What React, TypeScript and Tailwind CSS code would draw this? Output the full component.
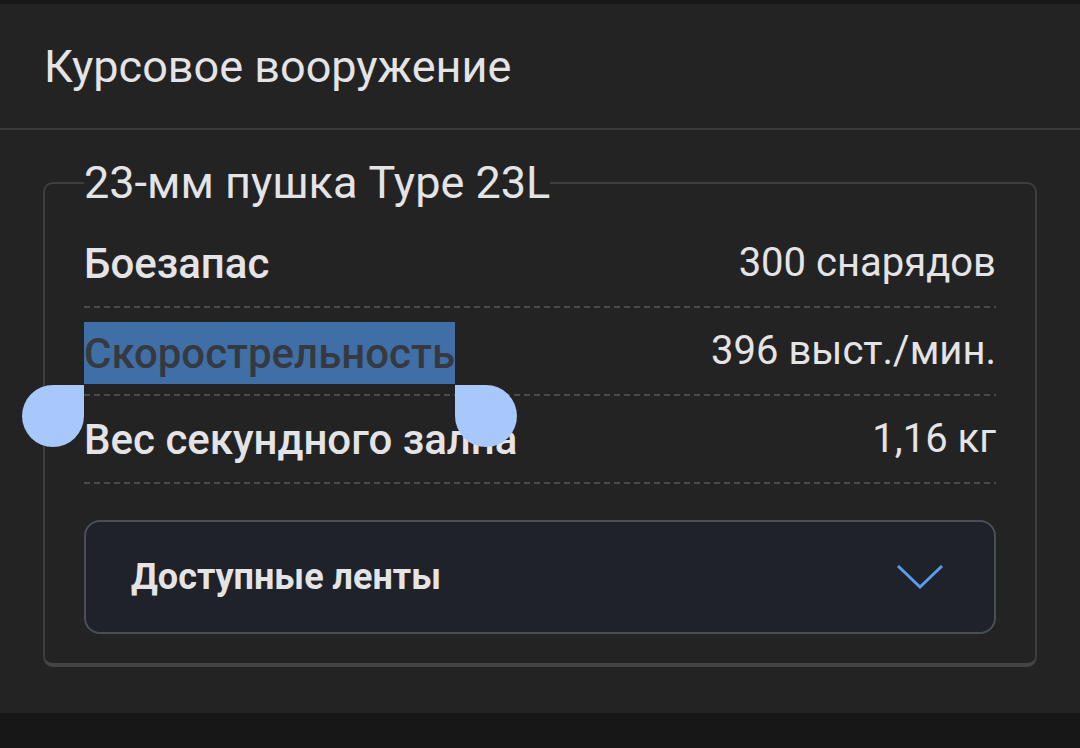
import React from "react";

const rows = [
  { label: "Боезапас", value: "300 снарядов" },
  { label: "Скорострельность", value: "396 выст./мин.", selected: true },
  { label: "Вес секундного залпа", value: "1,16 кг" },
];

export default function App() {
  return (
    <div
      className="w-[1080px] h-[748px] bg-[#232323] flex flex-col overflow-hidden text-[#e4e4e7]"
      style={{ fontFamily: "Roboto, 'Noto Sans', sans-serif" }}
    >
      <div className="h-[4px] bg-[#171717]" />
      <div className="h-[126px] flex items-center pl-[44px] border-b-2 border-[#3a3a3a]">
        <span className="text-[45px] leading-none">Курсовое вооружение</span>
      </div>
      <div className="flex-1 px-[43px] pt-[26px]">
        <fieldset className="relative border-2 border-b-[4px] border-[#3e3e3e] border-b-[#444444] rounded-[10px] px-[39px] pb-[29px]">
          <legend className="text-[45px] leading-[54px] p-0">23-мм пушка Type 23L</legend>
          <div className="flex flex-col mt-[10px]">
            {rows.map((r) => (
              <div key={r.label} className="relative flex flex-col">
                <div className="h-[86px] flex items-center justify-between">
                  {r.selected ? (
                    <span className="relative mt-[4px] font-medium text-[42px] text-[#363a40] bg-[#3f6fa6] h-[62px] flex items-center">
                      {r.label}
                      <span className="absolute left-[-62px] top-[63px] w-[62px] h-[62px] bg-[#a8c7fa] rounded-full rounded-tr-none z-10" />
                      <span className="absolute right-[-62px] top-[63px] w-[62px] h-[62px] bg-[#a8c7fa] rounded-full rounded-tl-none z-10" />
                    </span>
                  ) : (
                    <span className="font-medium text-[42px]">{r.label}</span>
                  )}
                  <span className="text-[40px]">{r.value}</span>
                </div>
                <div className="h-[2px] bg-[repeating-linear-gradient(to_right,#4a4a4a_0px,#4a4a4a_6px,transparent_6px,transparent_10px)]" />
              </div>
            ))}
          </div>
          <div className="mt-[36px] h-[114px] rounded-[16px] border-2 border-[#4a4f57] bg-[#1f2228] flex items-center justify-between pl-[45px] pr-[50px]">
            <span className="text-[36px] font-bold">Доступные ленты</span>
            <svg width="48" height="28" viewBox="0 0 48 28" fill="none">
              <path d="M2 3 L24 24 L46 3" stroke="#5a9cf0" strokeWidth="3" />
            </svg>
          </div>
        </fieldset>
      </div>
      <div className="h-[35px] bg-[#171717]" />
    </div>
  );
}
